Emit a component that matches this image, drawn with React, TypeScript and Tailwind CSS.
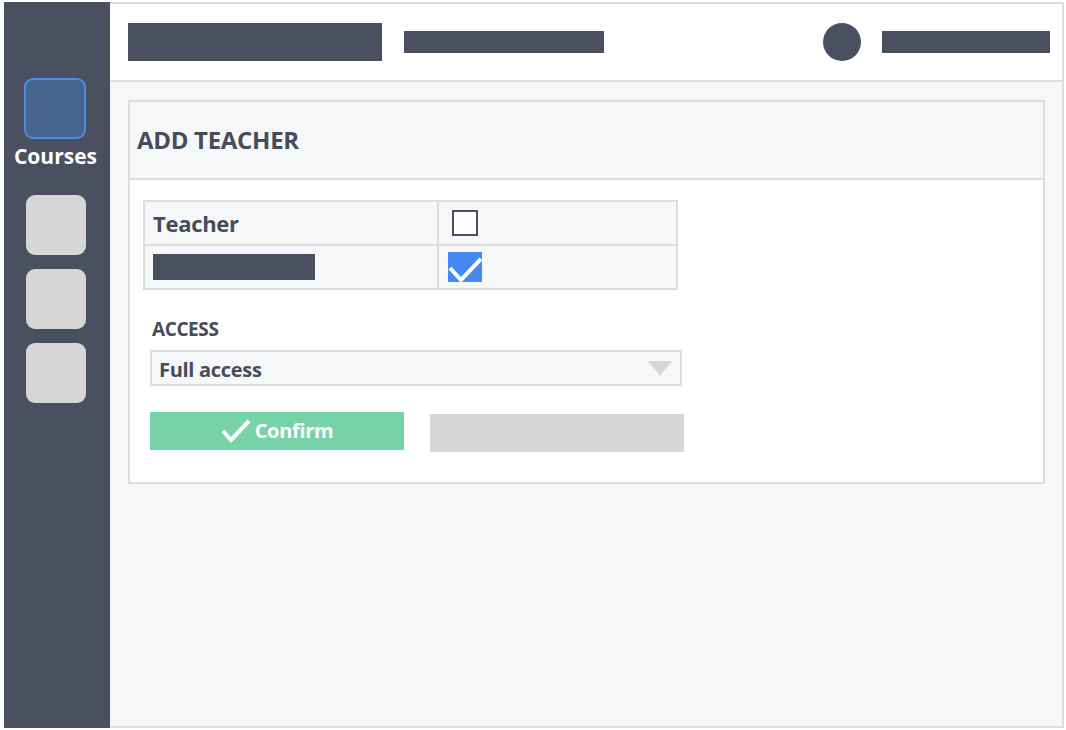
import { ReactNode } from "react";

const font = { fontFamily: '"Open Sans", "Liberation Sans", sans-serif' };

function SideButton({ active, label }: { active?: boolean; label?: string }) {
  if (active) {
    return (
      <div className="flex flex-col items-center">
        <div className="w-[62px] h-[61px] rounded-[9px] bg-[#46648f] border-2 border-[#4a8de3]" />
        <span className="mt-[2px] text-[21px] font-bold text-white leading-[30px]">
          {label}
        </span>
      </div>
    );
  }
  return <div className="w-[60px] h-[60px] rounded-[9px] bg-[#d6d6d6]" />;
}

function Cell({ children, className }: { children?: ReactNode; className?: string }) {
  return <div className={"flex items-center bg-[#f6f7f9] " + (className ?? "")}>{children}</div>;
}

export default function App() {
  return (
    <div
      className="w-full h-[730px] bg-white pt-[2px] pl-[4px] pr-[2px] pb-[2px] flex text-[#474c5c]"
      style={font}
    >
      {/* sidebar */}
      <div className="w-[106px] bg-[#4b5061] flex flex-col items-center pt-[76px] pr-[3px]">
        <SideButton active label="Courses" />
        <div className="mt-[24px] flex flex-col gap-[14px]">
          <SideButton />
          <SideButton />
          <SideButton />
        </div>
      </div>

      {/* main */}
      <div className="flex-1 flex flex-col border-t-2 border-r-2 border-b-2 border-[#dddddd] bg-[#f6f7f9]">
        <div className="h-[78px] bg-white border-b-2 border-[#dddddd] flex items-center pl-[18px] pr-[12px]">
          <div className="w-[254px] h-[38px] bg-[#4b5061]" />
          <div className="ml-[22px] w-[200px] h-[22px] bg-[#4b5061]" />
          <div className="ml-auto w-[38px] h-[38px] rounded-full bg-[#4b5061]" />
          <div className="ml-[21px] w-[168px] h-[22px] bg-[#4b5061]" />
        </div>

        <div className="pt-[18px] pl-[18px] pr-[17px]">
          <div className="border-2 border-[#dddddd]">
            <div className="h-[78px] border-b-2 border-[#dddddd] bg-[#f6f7f9] flex items-center pl-[7px]">
              <h1 className="text-[24px] font-bold tracking-[-0.3px]">ADD TEACHER</h1>
            </div>
            <div className="bg-white pt-[20px] pl-[13px] pb-[30px]">
              <div className="w-[535px] border-2 border-[#dddddd] grid grid-cols-[294px_1fr]">
                <Cell className="h-[44px] border-r-2 border-b-2 border-[#dddddd] pl-[8px]">
                  <span className="text-[22px] font-bold tracking-[-0.3px]">Teacher</span>
                </Cell>
                <Cell className="h-[44px] border-b-2 border-[#dddddd] pl-[13px]">
                  <div className="w-[26px] h-[26px] border-2 border-[#4b5061] bg-white" />
                </Cell>
                <Cell className="h-[42px] border-r-2 border-[#dddddd] pl-[8px]">
                  <div className="w-[162px] h-[26px] bg-[#4b5061]" />
                </Cell>
                <Cell className="h-[42px] pl-[9px]">
                  <svg width="34" height="30" viewBox="0 0 34 30">
                    <rect width="34" height="30" fill="#4688f1" />
                    <polyline points="2,16 13,28 33,7" fill="none" stroke="white" strokeWidth="4" />
                  </svg>
                </Cell>
              </div>

              <div className="mt-[27px] pl-[9px] text-[19px] font-bold leading-[24px] tracking-[-0.4px]">
                ACCESS
              </div>
              <div className="mt-[9px] ml-[7px] w-[532px] h-[36px] border-2 border-[#dddddd] bg-[#f6f7f9] flex items-center pl-[7px] pr-[8px]">
                <span className="mt-[3px] text-[20px] font-bold tracking-[-0.3px]">Full access</span>
                <svg className="ml-auto" width="24" height="15" viewBox="0 0 24 15">
                  <polygon points="0,0 24,0 12,15" fill="#d6d6d6" />
                </svg>
              </div>

              <div className="mt-[26px] ml-[7px] flex items-start">
                <button className="w-[254px] h-[38px] bg-[#77d3a7] text-white flex items-center justify-center gap-[4px]">
                  <svg width="30" height="24" viewBox="0 0 30 24">
                    <polyline points="2,12 10,21 28,2" fill="none" stroke="white" strokeWidth="4" />
                  </svg>
                  <span className="text-[20px] font-bold tracking-[-0.3px]">Confirm</span>
                </button>
                <div className="ml-[26px] mt-[2px] w-[254px] h-[38px] bg-[#d6d6d6]" />
              </div>
            </div>
          </div>
        </div>
      </div>
    </div>
  );
}
